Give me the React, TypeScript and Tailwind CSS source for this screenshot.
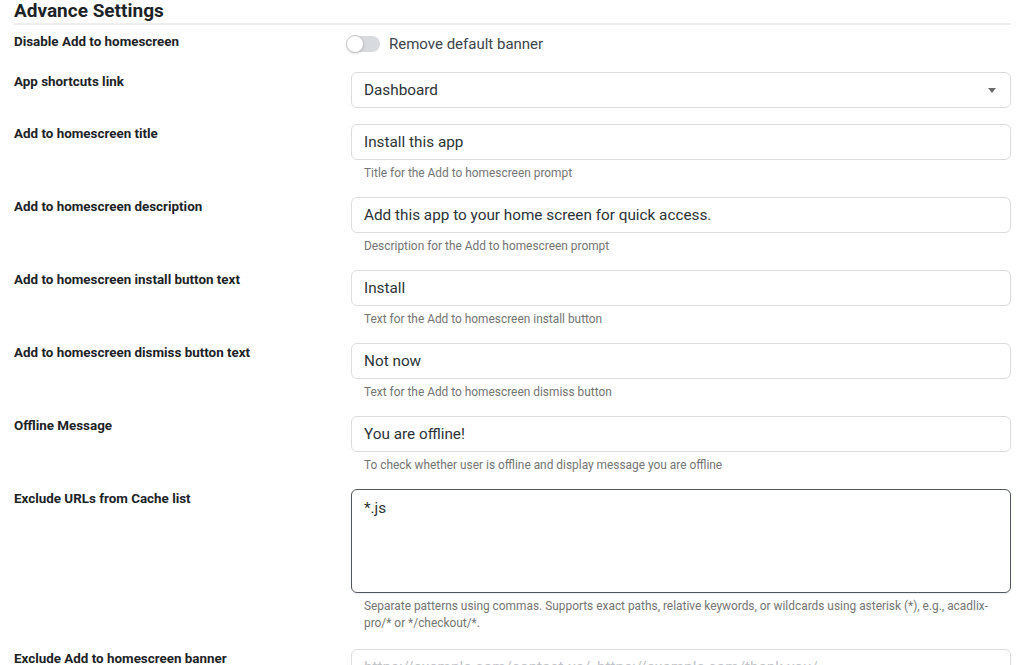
import React from "react";

const fields = [
  {
    label: "Add to homescreen title",
    value: "Install this app",
    help: "Title for the Add to homescreen prompt",
  },
  {
    label: "Add to homescreen description",
    value: "Add this app to your home screen for quick access.",
    help: "Description for the Add to homescreen prompt",
  },
  {
    label: "Add to homescreen install button text",
    value: "Install",
    help: "Text for the Add to homescreen install button",
  },
  {
    label: "Add to homescreen dismiss button text",
    value: "Not now",
    help: "Text for the Add to homescreen dismiss button",
  },
  {
    label: "Offline Message",
    value: "You are offline!",
    help: "To check whether user is offline and display message you are offline",
  },
];

function Label({ children }: { children: React.ReactNode }) {
  return (
    <div className="pt-[1px] text-[13.4px] leading-[18px] font-bold text-[#1d2327]">
      {children}
    </div>
  );
}

function Help({ children }: { children: React.ReactNode }) {
  return (
    <p className="mt-[5px] pl-[13px] pr-[20px] text-[11.9px] leading-[17px] text-[#757575]">
      {children}
    </p>
  );
}

export default function App() {
  return (
    <div
      className="min-h-screen bg-white pl-[14px] pr-[13px] overflow-hidden"
      style={{ fontFamily: "Roboto, 'Noto Sans', sans-serif" }}
    >
      {/* Header */}
      <h2 className="text-[19px] leading-[22px] font-bold text-[#1d2327] pb-[1px] border-b-2 border-[#eeeeee]">
        Advance Settings
      </h2>

      <div className="mt-[7px]">
        {/* Toggle row */}
        <div className="grid grid-cols-[333px_1fr] mb-4 items-start">
          <Label>Disable Add to homescreen</Label>
          <label className="flex items-center gap-[9px] h-[24px]">
            <span className="relative w-[33px] h-[16px] rounded-full bg-[#d7dadf]">
              <span className="absolute -left-[1px] -top-[1px] w-[18px] h-[18px] rounded-full bg-white border border-[#c3c4c7] shadow-sm"></span>
            </span>
            <span className="text-[15px] text-[#3c434a]">Remove default banner</span>
          </label>
        </div>

        {/* Select row */}
        <div className="grid grid-cols-[337px_1fr] mb-4">
          <Label>App shortcuts link</Label>
          <div className="h-9 rounded-md border border-[#dcdcde] flex items-center justify-between pl-[12px] pr-[14px] text-[15.3px] text-[#2c3338]">
            <span>Dashboard</span>
            <svg width="8" height="5" viewBox="0 0 8 5">
              <path d="M0 0 L8 0 L4 5 Z" fill="#6b6b6b" />
            </svg>
          </div>
        </div>

        {fields.map((f) => (
          <div key={f.label} className="grid grid-cols-[337px_1fr] mb-[15px]">
            <Label>{f.label}</Label>
            <div>
              <div className="h-9 rounded-md border border-[#dcdcde] flex items-center pl-[12px] text-[15.3px] text-[#2c3338]">
                {f.value}
              </div>
              <Help>{f.help}</Help>
            </div>
          </div>
        ))}

        {/* Textarea row */}
        <div className="grid grid-cols-[337px_1fr] mb-[17px]">
          <Label>Exclude URLs from Cache list</Label>
          <div>
            <div className="h-[104px] rounded-md border border-[#50575e] pl-[12px] pt-[8px] text-[15.3px] leading-[20px] text-[#2c3338] shadow-[0_1px_2px_rgba(0,0,0,0.08)]">
              *.js
            </div>
            <Help>
              Separate patterns using commas. Supports exact paths, relative keywords, or wildcards using asterisk (*), e.g., acadlix-pro/* or */checkout/*.
            </Help>
          </div>
        </div>

        {/* Last row */}
        <div className="grid grid-cols-[337px_1fr]">
          <Label>Exclude Add to homescreen banner</Label>
          <div className="h-9 rounded-md border border-[#dcdcde] flex items-center pl-[12px] text-[15.3px] text-[#c3c4c7]">
            https://example.com/contact-us/, https://example.com/thank-you/
          </div>
        </div>
      </div>
    </div>
  );
}
